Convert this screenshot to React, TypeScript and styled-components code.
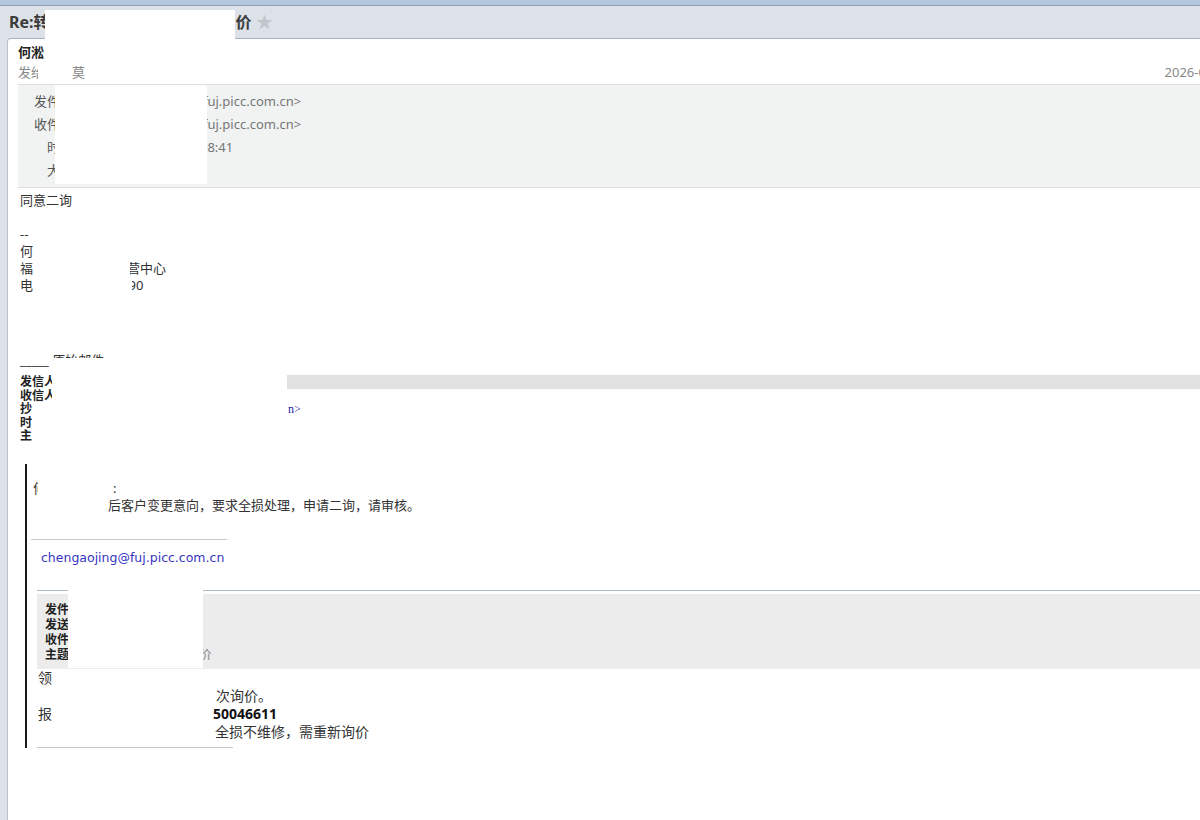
import React from 'react'
import styled, { createGlobalStyle } from 'styled-components'

const SANS = `"Noto Sans", "Noto Sans CJK SC", sans-serif`

const GlobalStyle = createGlobalStyle`
  html, body {
    margin: 0;
    padding: 0;
    height: 100%;
    overflow: hidden;
    background: #dce2e8;
  }
  body {
    font-family: ${SANS};
    font-size: 13px;
    color: #333;
  }
`

// Redaction boxes that sit on top of the mail
const MASKS = [
  { x: 45, y: 10, w: 190, h: 30 },
  { x: 55, y: 85, w: 152, h: 99 },
  { x: 52, y: 358, w: 235, h: 87 },
  { x: 68, y: 588, w: 135, h: 80 },
]

const App = () => (
  <Page>
    <GlobalStyle />
    <TopStrip />
    <TitleBar>
      <Title>
        Re:转<Gap $w={186} />价
      </Title>
      <Star>★</Star>
    </TitleBar>

    <Panel>
      <Header>
        <Name>何淞</Name>
        <SubRow>
          <span>
            发<Partial $w={7}>给</Partial>
            <Gap $w={34} />莫
          </span>
          <span>2026-01-15 08:41</span>
        </SubRow>
      </Header>

      <MetaBox>
        <MetaRow>
          <MetaLabel>发件人：</MetaLabel>
          <MetaValue>
            <Gap $w={111} />fuj.picc.com.cn&gt;
          </MetaValue>
        </MetaRow>
        <MetaRow>
          <MetaLabel>收件人：</MetaLabel>
          <MetaValue>
            <Gap $w={111} />fuj.picc.com.cn&gt;
          </MetaValue>
        </MetaRow>
        <MetaRow>
          <MetaLabel>时间：</MetaLabel>
          <MetaValue>
            <Gap $w={108} />08:41
          </MetaValue>
        </MetaRow>
        <MetaRow>
          <MetaLabel>大小：</MetaLabel>
          <MetaValue />
        </MetaRow>
      </MetaBox>

      <Body>
        <Line>同意二询</Line>
        <Line />
        <Line>--</Line>
        <Line>何</Line>
        <Line>
          福<Gap $w={97} />
          <Partial $w={10} $right>营</Partial>中心
        </Line>
        <Line>
          电<Gap $w={99} />
          <Partial $w={4} $right>9</Partial>0
        </Line>

        <Divider>_____ 原始邮件 _____</Divider>

        <OrigHead>
          <OrigRow>
            <OrigLabel>发信人:</OrigLabel>
            <OrigValue $shaded />
          </OrigRow>
          <OrigRow>
            <OrigLabel>收信人:</OrigLabel>
            <OrigValue />
          </OrigRow>
          <OrigRow>
            <OrigLabel>抄&emsp;&emsp;送:</OrigLabel>
            <OrigValue>
              <Gap $w={224} />
              <OrigLink>n&gt;</OrigLink>
            </OrigValue>
          </OrigRow>
          <OrigRow>
            <OrigLabel>时&emsp;&emsp;间:</OrigLabel>
            <OrigValue />
          </OrigRow>
          <OrigRow>
            <OrigLabel>主&emsp;&emsp;题:</OrigLabel>
            <OrigValue />
          </OrigRow>
        </OrigHead>

        <Quote>
          <QuoteLine>
            <Partial $w={5}>何</Partial>
            <Gap $w={75} />:
          </QuoteLine>
          <QuoteLine>
            <Gap $w={75} />后客户变更意向，要求全损处理，申请二询，请审核。
          </QuoteLine>

          <Rule $w={196} $ml={-2} $mt={25} $color="#c5c9ce" />
          <EmailLine>chengaojing@fuj.picc.com.cn</EmailLine>
          <Rule $ml={4} $mt={24} $color="#b3bdc7" />

          <InfoBox>
            <InfoRow>
              <InfoLabel>发件人:</InfoLabel>
            </InfoRow>
            <InfoRow>
              <InfoLabel>发送时间:</InfoLabel>
            </InfoRow>
            <InfoRow>
              <InfoLabel>收件人:</InfoLabel>
            </InfoRow>
            <InfoRow>
              <InfoLabel>主题:</InfoLabel>
              <InfoValue>
                <Gap $w={127} />价
              </InfoValue>
            </InfoRow>
          </InfoBox>

          <MailText>
            <BigLine>领</BigLine>
            <BigLine>
              <Gap $w={178} />次询价。
            </BigLine>
            <BigLine>
              报<Gap $w={161} />
              <strong>50046611</strong>
            </BigLine>
            <BigLine>
              <Gap $w={177} />全损不维修，需重新询价
            </BigLine>
          </MailText>

          <Rule $w={196} $ml={4} $mt={6} $color="#c0c7cf" />
        </Quote>
      </Body>
    </Panel>

    {MASKS.map((m, i) => (
      <Mask key={i} $x={m.x} $y={m.y} $w={m.w} $h={m.h} />
    ))}
  </Page>
)

export default App

const Page = styled.div`
  position: relative;
  width: 1300px;
  height: 820px;
  display: flex;
  flex-direction: column;
  background: #dce2e8;
`

const TopStrip = styled.div`
  flex-shrink: 0;
  height: 5px;
  background: #b5c7dc;
  border-bottom: 1px solid #8d9cb0;
`

const TitleBar = styled.div`
  flex-shrink: 0;
  height: 32px;
  display: flex;
  align-items: center;
  padding-left: 9px;
`

const Title = styled.h1`
  margin: 0;
  font: 700 16px/20px ${SANS};
  color: #3c3c3c;
  white-space: nowrap;
`

const Star = styled.span`
  margin-left: 4px;
  font-family: 'DejaVu Sans', sans-serif;
  font-size: 20px;
  line-height: 1;
  color: #c0c5cb;
`

const Panel = styled.main`
  flex: 1;
  min-height: 0;
  margin-left: 7px;
  background: #fff;
  border-top: 1px solid #a9b1ba;
  border-left: 1px solid #b9c1ca;
  border-top-left-radius: 4px;
`

const Header = styled.header`
  padding: 4px 31px 3px 10px;
`

const Name = styled.div`
  font-weight: 700;
  line-height: 18px;
  color: #222;
`

const SubRow = styled.div`
  display: flex;
  justify-content: space-between;
  margin-top: 2px;
  line-height: 18px;
  color: #888;
  white-space: nowrap;
`

const MetaBox = styled.section`
  margin-left: 10px;
  padding: 5px 0;
  background: #f0f3f2;
  border-top: 1px solid #dcdfe0;
  border-bottom: 1px solid #dcdfe0;
`

const MetaRow = styled.div`
  display: grid;
  grid-template-columns: 68px 1fr;
  column-gap: 6px;
  line-height: 23px;
  height: 23px;
`

const MetaLabel = styled.span`
  text-align: right;
  color: #555;
`

const MetaValue = styled.span`
  color: #777;
  white-space: nowrap;
`

const Body = styled.div`
  padding: 4px 0 0 12px;
`

const Line = styled.div`
  line-height: 17px;
  height: 17px;
  white-space: nowrap;
`

const Divider = styled.div`
  margin-top: 58px;
  line-height: 16px;
  white-space: nowrap;
`

const OrigHead = styled.div`
  margin-top: 7px;
  font-size: 12px;
  color: #222;
`

const OrigRow = styled.div`
  display: flex;
  height: 13.5px;
  line-height: 13.5px;
`

const OrigLabel = styled.span`
  width: 44px;
  flex-shrink: 0;
  font-weight: 700;
  white-space: nowrap;
`

const OrigValue = styled.span<{ $shaded?: boolean }>`
  flex: 1;
  white-space: nowrap;
  background: ${p => (p.$shaded ? '#e1e1e1' : 'transparent')};
`

const OrigLink = styled.span`
  font-family: 'Liberation Serif', serif;
  color: #1c1ca0;
`

const Quote = styled.blockquote`
  margin: 21px 0 0 5px;
  padding: 16px 0 0 6px;
  border-left: 2px solid #1a1a1a;
`

const QuoteLine = styled.div`
  line-height: 17px;
  height: 17px;
  white-space: nowrap;
`

const Rule = styled.div<{ $w?: number; $ml: number; $mt: number; $color: string }>`
  height: 1px;
  width: ${p => (p.$w ? `${p.$w}px` : 'auto')};
  margin: ${p => p.$mt}px 0 0 ${p => p.$ml}px;
  background: ${p => p.$color};
`

const EmailLine = styled.div`
  margin-top: 9px;
  padding-left: 8px;
  font-family: 'DejaVu Sans', sans-serif;
  font-size: 12.5px;
  line-height: 17px;
  color: #3636c0;
`

const InfoBox = styled.div`
  margin: 3px 0 0 4px;
  padding: 8px 8px 7px;
  background: #ececec;
  font-size: 12px;
  color: #222;
`

const InfoRow = styled.div`
  display: flex;
  height: 15px;
  line-height: 15px;
  white-space: nowrap;
`

const InfoLabel = styled.span`
  font-weight: 700;
`

const InfoValue = styled.span`
  color: #888;
`

const MailText = styled.div`
  padding-left: 5px;
  font-size: 14px;
  color: #333;

  strong {
    color: #111;
  }
`

const BigLine = styled.div`
  height: 18px;
  line-height: 18px;
  white-space: nowrap;
`

const Gap = styled.span<{ $w: number }>`
  display: inline-block;
  width: ${p => p.$w}px;
`

const Partial = styled.span<{ $w: number; $right?: boolean }>`
  display: inline-block;
  width: ${p => p.$w}px;
  overflow: hidden;
  vertical-align: top;
  white-space: nowrap;
  direction: ${p => (p.$right ? 'rtl' : 'ltr')};
`

const Mask = styled.div<{ $x: number; $y: number; $w: number; $h: number }>`
  position: absolute;
  left: ${p => p.$x}px;
  top: ${p => p.$y}px;
  width: ${p => p.$w}px;
  height: ${p => p.$h}px;
  background: #fff;
  z-index: 5;
`
